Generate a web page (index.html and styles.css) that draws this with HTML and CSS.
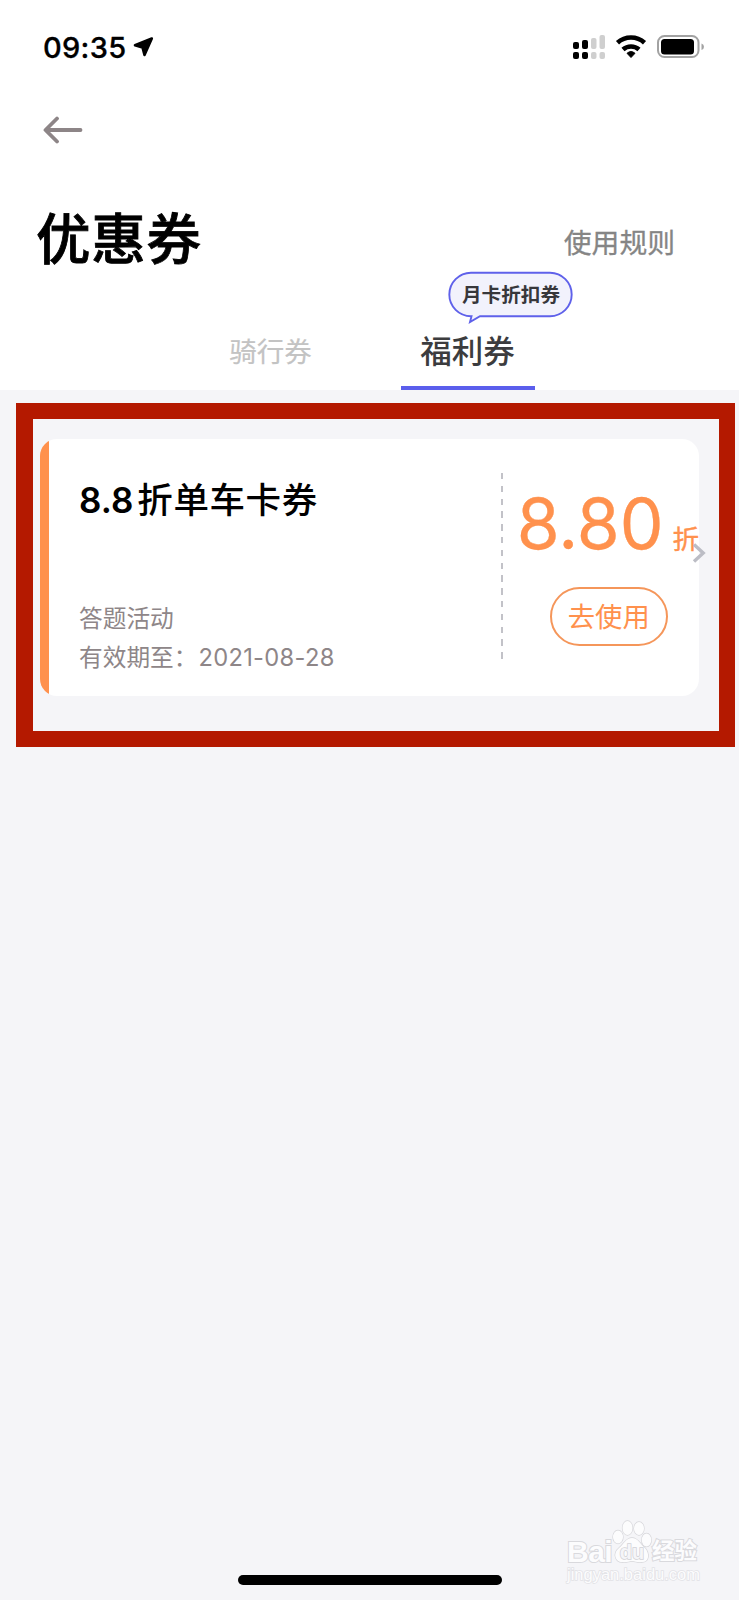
FILE: index.html
```
<!DOCTYPE html>
<html lang="zh-CN">
<head>
<meta charset="utf-8">
<title>优惠券</title>
<link rel="stylesheet" href="styles.css">
</head>
<body>
<div class="screen">
  <header class="header">
    <div class="status">
      <span class="time">09:35</span>
      <svg class="locate" width="22" height="22" viewBox="0 0 22 22"><path d="M18.800 2.500 2 9.300 9.500 11.500 11.500 19Z" fill="#000" stroke="#000" stroke-width="2.600" stroke-linejoin="round"/></svg>
      <svg class="indicators" width="134" height="26" viewBox="0 0 134 26">
        <g fill="#000"><rect x="3" y="8" width="6" height="7" rx="2"/><rect x="12" y="6" width="6" height="9" rx="2"/><rect x="3" y="18" width="6" height="7" rx="2"/><rect x="12" y="18" width="6" height="7" rx="2"/></g>
        <g fill="#cfcfcf"><rect x="21" y="4" width="5.5" height="11" rx="2"/><rect x="29.500" y="1" width="5.500" height="14" rx="2"/><rect x="21" y="18" width="5.500" height="7" rx="2"/><rect x="29.500" y="18" width="5.500" height="7" rx="2"/></g>
        <g fill="none" stroke="#000" stroke-width="4.600"><path d="M47.500 8.700A20 20 0 0 1 74.500 8.700"/><path d="M53 15.500A12 12 0 0 1 69 15.500"/></g>
        <path d="M57 19.300Q61 15.800 65 19.300L61 23.500Z" fill="#000" stroke="#000" stroke-linejoin="round"/>
        <rect x="88" y="2" width="40.500" height="21" rx="6.500" fill="none" stroke="#a2a2a2" stroke-width="2"/>
        <rect x="91" y="5" width="33" height="15.500" rx="3.500"/>
        <path d="M131.500 9.500Q134 10.300 134 12.800T131.500 16Z" fill="#a2a2a2"/>
      </svg>
    </div>
    <svg class="back" width="40" height="28" viewBox="0 0 40 28"><path d="M37.500 14H3M14 2.500 2.500 14 14 25.500" fill="none" stroke="#8d8587" stroke-width="3.800" stroke-linecap="round" stroke-linejoin="round"/></svg>
    <div class="heading">
      <h1 class="title">优惠券</h1>
      <a class="rules">使用规则</a>
    </div>
    <nav class="tabs">
      <a class="tab">骑行券</a>
      <a class="tab tab-active">福利券
        <span class="bubble">
          <svg class="bubble-shape" width="126" height="53" viewBox="0 0 126 53"><path d="M23 1.800H102A21.700 21.700 0 0 1 102 45.200H32L22 51 23.500 45.200H23A21.700 21.700 0 0 1 23 1.800Z" fill="#f2f2fc" stroke="#5f61ea" stroke-width="1.900"/></svg>
          <span class="bubble-text">月卡折扣券</span>
        </span>
      </a>
    </nav>
  </header>
  <main class="frame">
    <article class="coupon">
      <div class="info">
        <h2 class="name"><span class="name-num">8.8</span>折单车卡券</h2>
        <p class="meta">答题活动</p>
        <p class="meta">有效期至：<span class="date">2021-08-28</span></p>
      </div>
      <div class="divider"></div>
      <div class="offer">
        <div class="amount"><span class="value">8.80</span><span class="unit">折</span></div>
        <a class="use">去使用</a>
      </div>
      <svg class="chevron" width="14" height="22" viewBox="0 0 14 22"><path d="M2 2.500 11.200 11 2 19.500" fill="none" stroke="#bcbdc5" stroke-width="3.400"/></svg>
    </article>
  </main>
  <footer class="footer">
    <div class="mark">
      <div class="brand">
        <span class="brand-bai">Bai</span>
        <svg class="paw" width="40" height="44" viewBox="0 0 40 44"><g fill="#fcfcfd" stroke="#d6d6da" stroke-width="1.300"><ellipse cx="6" cy="17" rx="5" ry="6.500"/><ellipse cx="15.500" cy="8" rx="5" ry="7"/><ellipse cx="27" cy="8.500" rx="5" ry="6.500"/><ellipse cx="34.500" cy="20" rx="4.800" ry="6.500"/><path d="M20 18C14 18 12 24 7 28 0 34 4 42 10 42 14 43 17 41 20 41S26 43 30 42C37 42 38 34 33 28 28 24 26 18 20 18Z"/></g><text class="paw-text" x="20" y="38.500" text-anchor="middle">du</text></svg>
        <span class="brand-cn">经验</span>
      </div>
      <div class="mark-url">jingyan.baidu.com</div>
    </div>
    <div class="home"></div>
  </footer>
</div>
</body>
</html>
```
FILE: styles.css
```
* { box-sizing: border-box; margin: 0; padding: 0; }
body { background: #f5f5f8; font-family: Inter, "Noto Sans CJK SC", sans-serif; }
.screen { width: 739px; height: 1600px; display: flex; flex-direction: column; overflow: hidden; background: #f5f5f8; }
.header { height: 390px; background: #fff; display: flex; flex-direction: column; flex: none; }
.status { height: 62px; margin-top: 16px; padding: 0 35px 0 43px; display: flex; align-items: center; }
.time { font-size: 29px; font-weight: 500; line-height: 62px; width: 90px; color: #000; white-space: nowrap; padding-top: 1px; letter-spacing: .3px; -webkit-text-stroke: .3px #000; }
.locate { margin-top: -1px; }
.indicators { margin-left: auto; }
.back { margin: 38px 0 0 43px; }
.heading { display: flex; justify-content: space-between; align-items: center; height: 80px; margin-top: 55px; padding: 0 64px 0 36px; }
.title { font-size: 54.500px; font-weight: 500; line-height: 80px; color: #000; letter-spacing: .8px; -webkit-text-stroke: .8px #000; }
.rules { font-size: 27.800px; line-height: 40px; color: #858585; font-weight: 400; margin-top: 7px; -webkit-text-stroke: .3px #858585; }
.tabs { display: flex; height: 78px; margin: auto 0 0 204px; gap: 63px; }
.tab { width: 134px; line-height: 80px; text-align: center; font-size: 27.500px; color: #c3c3c3; white-space: nowrap; text-indent: -1px; -webkit-text-stroke: .2px; }
.tab-active { position: relative; font-size: 31.500px; font-weight: 500; color: #3c3c3e; border-bottom: 4px solid #5b5eec; line-height: 79px; -webkit-text-stroke: 0; }
.bubble { position: absolute; left: 47px; top: -41px; width: 126px; height: 53px; }
.bubble-shape { position: absolute; left: 0; top: 0; }
.bubble-text { position: relative; display: block; font-size: 19.600px; line-height: 48px; color: #37373b; font-weight: 600; text-indent: 0; }
.frame { margin: 13px 4px 0 16px; border: 16px solid #b41900; border-left-width: 17px; height: 344px; padding: 20px 20px 0 7px; flex: none; }
.coupon { position: relative; height: 257px; border-radius: 17px; background: linear-gradient(90deg, #ff914d 9px, #fff 9px); display: flex; }
.info { width: 462px; padding: 36px 0 0 39px; }
.name { font-size: 35.500px; line-height: 50px; font-weight: 500; color: #000; white-space: nowrap; margin-bottom: 73px; letter-spacing: .6px; }
.name-num { font-size: 35px; font-weight: 600; margin-right: 4px; letter-spacing: 0; }
.meta { font-size: 23.700px; line-height: 39px; color: #8e8688; font-weight: 400; white-space: nowrap; }
.date { font-size: 23.700px; letter-spacing: .3px; margin-left: 1px; }
.divider { width: 2px; height: 187px; margin-top: 34px; background: repeating-linear-gradient(#c2c2c8 0 6.500px, transparent 6.500px 12.800px); }
.offer { flex: 1; padding-top: 43px; display: flex; flex-direction: column; }
.amount { height: 84px; padding-left: 14px; display: flex; align-items: baseline; color: #ff914d; white-space: nowrap; }
.value { font-size: 69.500px; line-height: 84px; font-weight: 400; -webkit-text-stroke: .3px #ff914d; }
.unit { font-size: 26.500px; margin-left: 9px; font-weight: 400; -webkit-text-stroke: .4px #ff914d; }
.use { width: 118px; height: 59px; margin: 21px 0 0 47px; border: 2px solid #f5965a; border-radius: 30px; color: #ff914d; font-size: 27.300px; line-height: 57px; text-align: center; }
.chevron { position: absolute; right: -7px; top: 103px; }
.footer { margin-top: auto; height: 87px; display: flex; flex-direction: column; align-items: center; flex: none; }
.mark { align-self: flex-end; width: 174px; height: 75px; flex: none; font-family: "Liberation Sans", "Noto Sans CJK SC", sans-serif; color: #fcfcfd; -webkit-text-stroke: 2px #d9d9dd; paint-order: stroke fill; }
.brand { display: flex; height: 52px; padding-top: 7px; }
.brand-bai { font-size: 30px; line-height: 30px; font-weight: 600; width: 45px; margin: 17px 0 0 2px; letter-spacing: -.5px; white-space: nowrap; }
.brand-cn { font-size: 22.500px; font-weight: 700; line-height: 30px; margin: 17px 0 0 0; white-space: nowrap; }
.paw { flex: none; }
.paw-text { font-size: 20px; font-weight: 700; fill: #f5f5f8; -webkit-text-stroke: 0; stroke: #d2d2d6; stroke-width: 1.500px; }
.mark-url { font-size: 16.500px; line-height: 20px; font-weight: 400; margin-top: -1px; padding-left: 2px; -webkit-text-stroke: 1.500px #e2e2e6; white-space: nowrap; }
.home { width: 264px; height: 10px; border-radius: 5px; background: #000; flex: none; margin-top: -13px; }
```
